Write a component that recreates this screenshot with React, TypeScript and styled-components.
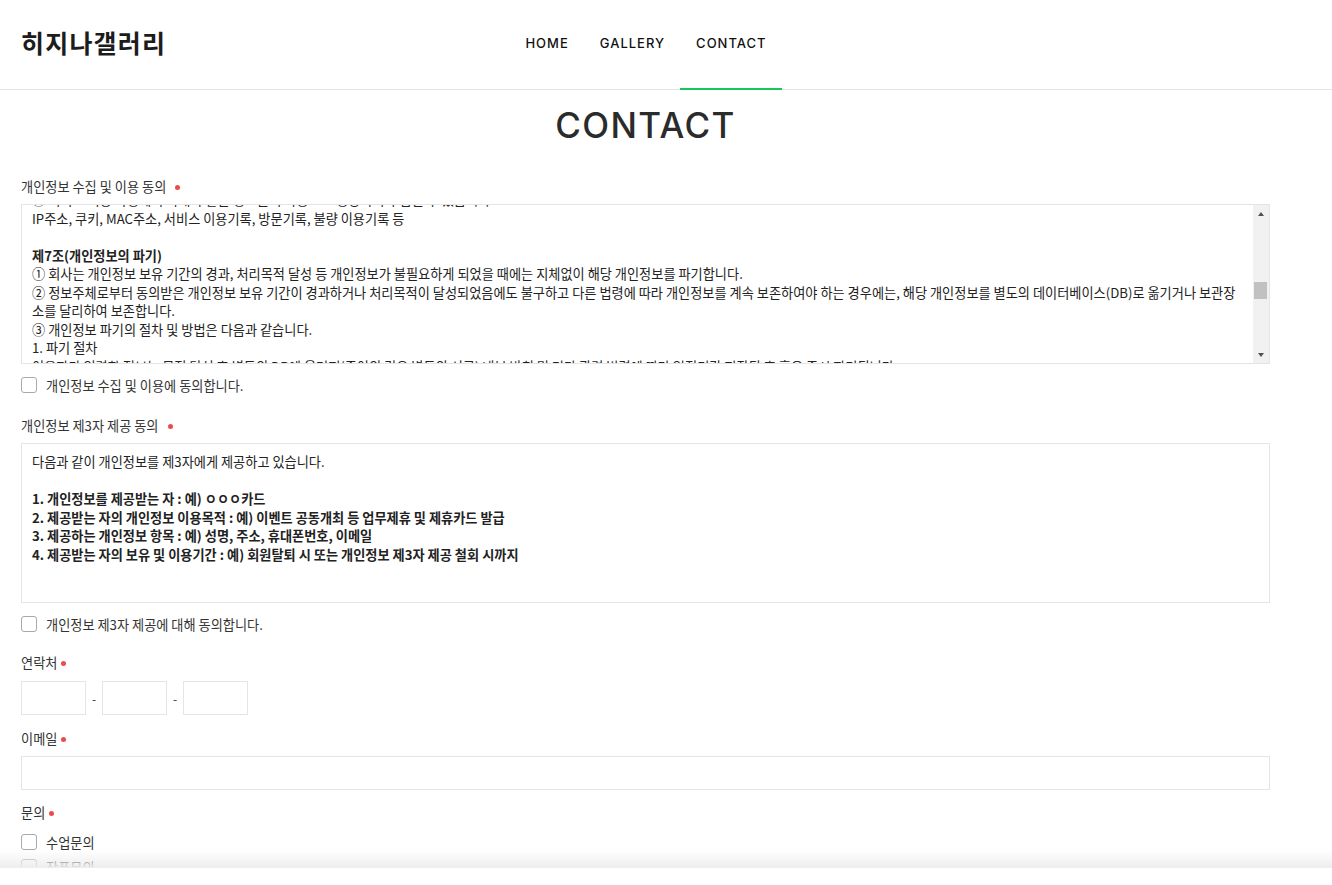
import React from "react";
import styled, { createGlobalStyle } from "styled-components";

const GlobalStyle = createGlobalStyle`
  html, body { margin: 0; padding: 0; background: #fff; }
  body {
    font-family: "Noto Sans CJK KR", "Noto Sans", sans-serif;
    color: #333;
  }
  * { box-sizing: border-box; }
`;

const Header = styled.header`
  height: 90px;
  border-bottom: 1px solid #e5e5e5;
`;

const HeaderInner = styled.div`
  width: 1249px;
  margin-left: 21px;
  height: 89px;
  display: grid;
  grid-template-columns: 1fr auto 1fr;
  align-items: center;
`;

const Logo = styled.div`
  font-family: "Noto Sans CJK KR", sans-serif;
  font-weight: 700;
  font-size: 25px;
  letter-spacing: 1.2px;
  color: #1c1c1c;
  line-height: 1;
  margin-top: -5px;
`;

const Nav = styled.nav`
  display: flex;
  align-self: stretch;
`;

const NavLink = styled.a<{ $active?: boolean }>`
  display: flex;
  align-items: center;
  height: 90px;
  margin-bottom: -1px;
  padding: 0 15px 3px 16px;
  font-family: "Inter", "Open Sans", sans-serif;
  font-size: 13px;
  font-weight: 500;
  letter-spacing: 1px;
  color: #111;
  text-decoration: none;
  border-bottom: 2px solid ${(p) => (p.$active ? "#14c75a" : "transparent")};
`;

const Main = styled.main`
  width: 1249px;
  margin-left: 21px;
  padding-bottom: 40px;
`;

const Title = styled.h1`
  margin: 10px 0 0;
  height: 50px;
  line-height: 50px;
  text-align: center;
  font-family: "Inter", "Open Sans", sans-serif;
  font-weight: 500;
  font-size: 35px;
  letter-spacing: 1.4px;
  color: #2b2b2b;
`;

const Form = styled.form`
  display: flex;
  flex-direction: column;
`;

const Label = styled.div<{ $gap: number }>`
  margin-top: ${(p) => p.$gap}px;
  height: 18px;
  line-height: 18px;
  font-size: 13.2px;
  color: #333;
  display: flex;
  align-items: center;
`;

const Required = styled.span<{ $space: number }>`
  display: inline-block;
  width: 5px;
  height: 5px;
  border-radius: 50%;
  background: #ec4b4b;
  margin-left: ${(p) => p.$space}px;
`;

const TermsBox = styled.div<{ $gap: number }>`
  margin-top: ${(p) => p.$gap}px;
  height: 160px;
  border: 1px solid #e5e5e5;
  display: flex;
  overflow: hidden;
`;

const TermsViewport = styled.div`
  flex: 1;
  overflow: hidden;
  padding: 0 10px;
`;

const TermsContent = styled.div<{ $offset: number; $pad: number }>`
  margin-top: ${(p) => -p.$offset}px;
  padding-top: ${(p) => p.$pad}px;
  font-size: 13.2px;
  line-height: 18.5px;
  color: #222;
`;

const Line = styled.div<{ $bold?: boolean }>`
  white-space: nowrap;
  min-height: 18.5px;
  font-weight: ${(p) => (p.$bold ? 700 : 400)};
`;

const ScrollTrack = styled.div`
  width: 16px;
  background: #f1f1f1;
  display: flex;
  flex-direction: column;
`;

const ArrowButton = styled.div<{ $down?: boolean }>`
  height: 17px;
  display: flex;
  align-items: center;
  justify-content: center;
  &::before {
    content: "";
    width: 0;
    height: 0;
    border-left: 3.5px solid transparent;
    border-right: 3.5px solid transparent;
    ${(p) =>
      p.$down
        ? "border-top: 4px solid #505050;"
        : "border-bottom: 4px solid #505050;"}
  }
`;

const Rail = styled.div`
  flex: 1;
`;

const Thumb = styled.div<{ $top: number }>`
  margin: ${(p) => p.$top}px 2px 0 1px;
  height: 17px;
  background: #c1c1c1;
`;

const CheckRow = styled.label<{ $gap: number }>`
  margin-top: ${(p) => p.$gap}px;
  height: 18px;
  display: flex;
  align-items: center;
  gap: 9px;
  font-size: 13.2px;
  color: #333;
`;

const Check = styled.input.attrs({ type: "checkbox" })`
  appearance: none;
  margin: 0;
  width: 16px;
  height: 16px;
  border: 1px solid #aaa;
  border-radius: 3px;
  background: #fff;
  flex: none;
`;

const PhoneRow = styled.div<{ $gap: number }>`
  margin-top: ${(p) => p.$gap}px;
  display: flex;
  align-items: center;
`;

const TextInput = styled.input<{ $width?: number }>`
  width: ${(p) => (p.$width ? `${p.$width}px` : "100%")};
  height: 34px;
  border: 1px solid #e5e5e5;
  margin: 0;
  padding: 0 8px;
  font-size: 13px;
  outline: none;
  background: #fff;
`;

const Dash = styled.span`
  width: 16px;
  text-align: center;
  font-size: 12px;
  color: #333;
`;

const FieldWrap = styled.div<{ $gap: number }>`
  margin-top: ${(p) => p.$gap}px;
`;

const BottomFade = styled.div`
  position: fixed;
  left: 0;
  right: 0;
  bottom: 0;
  height: 35px;
  background: linear-gradient(
    to bottom,
    rgba(255, 255, 255, 0) 0px,
    #ededed 18px,
    #ffffff 18px
  );
  pointer-events: none;
`;

const privacyLines: { text: string; bold?: boolean }[] = [
  { text: "③ 서비스 이용 과정에서 아래와 같은 정보들이 자동으로 생성되어 수집될 수 있습니다." },
  { text: "IP주소, 쿠키, MAC주소, 서비스 이용기록, 방문기록, 불량 이용기록 등" },
  { text: "" },
  { text: "제7조(개인정보의 파기)", bold: true },
  { text: "① 회사는 개인정보 보유 기간의 경과, 처리목적 달성 등 개인정보가 불필요하게 되었을 때에는 지체없이 해당 개인정보를 파기합니다." },
  { text: "② 정보주체로부터 동의받은 개인정보 보유 기간이 경과하거나 처리목적이 달성되었음에도 불구하고 다른 법령에 따라 개인정보를 계속 보존하여야 하는 경우에는, 해당 개인정보를 별도의 데이터베이스(DB)로 옮기거나 보관장" },
  { text: "소를 달리하여 보존합니다." },
  { text: "③ 개인정보 파기의 절차 및 방법은 다음과 같습니다." },
  { text: "1. 파기 절차" },
  { text: "이용자가 입력한 정보는 목적 달성 후 별도의 DB에 옮겨져(종이의 경우 별도의 서류) 내부 방침 및 기타 관련 법령에 따라 일정기간 저장된 후 혹은 즉시 파기됩니다." },
  { text: "2. 파기 방법" },
  { text: "전자적 파일 형태의 정보는 기록을 재생할 수 없는 기술적 방법을 사용합니다." },
];

const thirdPartyLines: { text: string; bold?: boolean }[] = [
  { text: "다음과 같이 개인정보를 제3자에게 제공하고 있습니다." },
  { text: "" },
  { text: "1. 개인정보를 제공받는 자 : 예) ㅇㅇㅇ카드", bold: true },
  { text: "2. 제공받는 자의 개인정보 이용목적 : 예) 이벤트 공동개최 등 업무제휴 및 제휴카드 발급", bold: true },
  { text: "3. 제공하는 개인정보 항목 : 예) 성명, 주소, 휴대폰번호, 이메일", bold: true },
  { text: "4. 제공받는 자의 보유 및 이용기간 : 예) 회원탈퇴 시 또는 개인정보 제3자 제공 철회 시까지", bold: true },
];

export default function App() {
  return (
    <>
      <GlobalStyle />
      <Header>
        <HeaderInner>
          <Logo>히지나갤러리</Logo>
          <Nav>
            <NavLink href="#">HOME</NavLink>
            <NavLink href="#">GALLERY</NavLink>
            <NavLink href="#" $active>
              CONTACT
            </NavLink>
          </Nav>
          <div />
        </HeaderInner>
      </Header>
      <Main>
        <Title>CONTACT</Title>
        <Form>
          <Label $gap={28}>
            개인정보 수집 및 이용 동의
            <Required $space={9} />
          </Label>
          <TermsBox $gap={8}>
            <TermsViewport>
              <TermsContent $offset={14} $pad={0}>
                {privacyLines.map((l, i) => (
                  <Line key={i} $bold={l.bold}>
                    {l.text}
                  </Line>
                ))}
              </TermsContent>
            </TermsViewport>
            <ScrollTrack>
              <ArrowButton />
              <Rail>
                <Thumb $top={60} />
              </Rail>
              <ArrowButton $down />
            </ScrollTrack>
          </TermsBox>
          <CheckRow $gap={12}>
            <Check />
            개인정보 수집 및 이용에 동의합니다.
          </CheckRow>

          <Label $gap={23}>
            개인정보 제3자 제공 동의
            <Required $space={9} />
          </Label>
          <TermsBox $gap={8}>
            <TermsViewport>
              <TermsContent $offset={0} $pad={9}>
                {thirdPartyLines.map((l, i) => (
                  <Line key={i} $bold={l.bold}>
                    {l.text}
                  </Line>
                ))}
              </TermsContent>
            </TermsViewport>
          </TermsBox>
          <CheckRow $gap={12}>
            <Check />
            개인정보 제3자 제공에 대해 동의합니다.
          </CheckRow>

          <Label $gap={21}>
            연락처
            <Required $space={4} />
          </Label>
          <PhoneRow $gap={9}>
            <TextInput $width={65} />
            <Dash>-</Dash>
            <TextInput $width={65} />
            <Dash>-</Dash>
            <TextInput $width={65} />
          </PhoneRow>

          <Label $gap={15}>
            이메일
            <Required $space={4} />
          </Label>
          <FieldWrap $gap={8}>
            <TextInput />
          </FieldWrap>

          <Label $gap={14}>
            문의
            <Required $space={4} />
          </Label>
          <CheckRow $gap={11}>
            <Check />
            수업문의
          </CheckRow>
          <CheckRow $gap={7}>
            <Check />
            작품문의
          </CheckRow>
          <CheckRow $gap={7}>
            <Check />
            기타문의
          </CheckRow>
        </Form>
      </Main>
      <BottomFade />
    </>
  );
}
